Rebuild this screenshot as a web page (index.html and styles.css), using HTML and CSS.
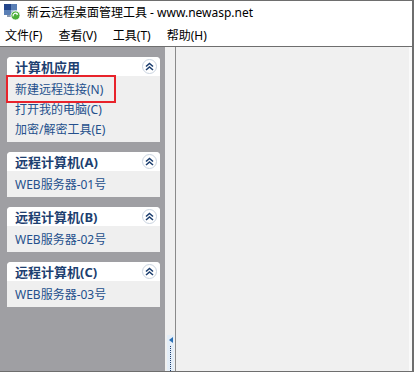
FILE: index.html
```html
<!DOCTYPE html>
<html lang="zh-CN">

<head>
    <meta charset="UTF-8">
    <meta name="viewport" content="width=device-width, initial-scale=1.0">
    <title>新云远程桌面管理工具</title>
    <link rel="stylesheet" href="styles.css">
</head>

<body>
    <div class="window">
        <div class="titlebar">
            <svg class="app-icon" width="18" height="18" viewBox="0 0 18 18">
                <rect x="1" y="1" width="13" height="11" fill="#5a7fb5" />
                <rect x="1" y="1" width="7" height="6" fill="#23458a" />
                <rect x="8" y="7" width="6" height="5" fill="#a9bfdc" />
                <rect x="4" y="12" width="7" height="2" fill="#8a9ab0" />
                <circle cx="12.5" cy="12.5" r="4.5" fill="#4caf3a" stroke="#fff" stroke-width="0.8" />
                <path d="M10.2 13.4 A2.4 2.4 0 0 1 14.4 11.2" fill="none" stroke="#fff" stroke-width="1.2" />
                <path d="M13.4 10 L15.2 11.3 L13.6 12.6 Z" fill="#fff" />
            </svg>
            <span class="title-text">新云远程桌面管理工具 - www.newasp.net</span>
        </div>

        <div class="menubar">
            <span class="menu-item">文件(F)</span>
            <span class="menu-item">查看(V)</span>
            <span class="menu-item">工具(T)</span>
            <span class="menu-item">帮助(H)</span>
        </div>

        <div class="main">
            <div class="sidebar">
                <div class="card">
                    <div class="card-head">
                        <span>计算机应用</span>
                        <span class="collapse">
                            <svg width="9" height="9" viewBox="0 0 9 9">
                                <path d="M1 4.5 L4.5 1.5 L8 4.5 M1 8 L4.5 5 L8 8" fill="none" stroke="#1d3f70" stroke-width="1.6" />
                            </svg>
                        </span>
                    </div>
                    <div class="card-body">
                        <div class="item highlight">新建远程连接(N)</div>
                        <div class="item">打开我的电脑(C)</div>
                        <div class="item">加密/解密工具(E)</div>
                    </div>
                </div>

                <div class="card">
                    <div class="card-head">
                        <span>远程计算机(A)</span>
                        <span class="collapse">
                            <svg width="9" height="9" viewBox="0 0 9 9">
                                <path d="M1 4.5 L4.5 1.5 L8 4.5 M1 8 L4.5 5 L8 8" fill="none" stroke="#1d3f70" stroke-width="1.6" />
                            </svg>
                        </span>
                    </div>
                    <div class="card-body">
                        <div class="item">WEB服务器-01号</div>
                    </div>
                </div>

                <div class="card">
                    <div class="card-head">
                        <span>远程计算机(B)</span>
                        <span class="collapse">
                            <svg width="9" height="9" viewBox="0 0 9 9">
                                <path d="M1 4.5 L4.5 1.5 L8 4.5 M1 8 L4.5 5 L8 8" fill="none" stroke="#1d3f70" stroke-width="1.6" />
                            </svg>
                        </span>
                    </div>
                    <div class="card-body">
                        <div class="item">WEB服务器-02号</div>
                    </div>
                </div>

                <div class="card">
                    <div class="card-head">
                        <span>远程计算机(C)</span>
                        <span class="collapse">
                            <svg width="9" height="9" viewBox="0 0 9 9">
                                <path d="M1 4.5 L4.5 1.5 L8 4.5 M1 8 L4.5 5 L8 8" fill="none" stroke="#1d3f70" stroke-width="1.6" />
                            </svg>
                        </span>
                    </div>
                    <div class="card-body">
                        <div class="item">WEB服务器-03号</div>
                    </div>
                </div>
            </div>

            <div class="splitter">
                <div class="grip">
                    <span class="grip-arrow"></span>
                    <span class="grip-dots"></span>
                </div>
            </div>

            <div class="content"></div>
        </div>
    </div>
</body>

</html>
```

FILE: styles.css
```css
body {
    margin: 0;
    font-family: "Noto Sans", "Noto Sans CJK SC", sans-serif;
    font-size: 12px;
    color: #000;
    background: #fff;
}

.window {
    width: 414px;
    height: 372px;
    box-sizing: border-box;
    border-top: 1px solid #6e6e6e;
    border-right: 2px solid #6e6e6e;
    border-bottom: 1px solid #6e6e6e;
    display: flex;
    flex-direction: column;
    background: #fff;
}

.titlebar {
    height: 22px;
    display: flex;
    align-items: center;
    padding-left: 3px;
}

.app-icon {
    margin-right: 6px;
}

.title-text {
    font-size: 12px;
}

.menubar {
    height: 23px;
    display: flex;
    align-items: center;
    padding-left: 5px;
}

.menu-item {
    margin-right: 16px;
}

.main {
    flex: 1;
    display: flex;
    border-top: 1px solid #6e6e6e;
    min-height: 0;
}

.sidebar {
    width: 153px;
    background: #9f9fa3;
    padding: 10px 5px 0 7px;
    display: flex;
    flex-direction: column;
    gap: 10px;
}

.card {
    background: #efefef;
    border-radius: 4px 4px 0 0;
    padding-bottom: 2px;
}

.card-head {
    height: 19px;
    background: #fff;
    border-radius: 4px 4px 0 0;
    display: flex;
    align-items: center;
    justify-content: space-between;
    padding: 0 3px 0 8px;
    font-weight: bold;
    font-size: 13px;
    color: #1d3f70;
}

.collapse {
    width: 13px;
    height: 13px;
    border: 1px solid #c9d3df;
    border-radius: 50%;
    background: #fff;
    display: flex;
    align-items: center;
    justify-content: center;
}

.card-body {
    padding-top: 4px;
}

.item {
    height: 20px;
    line-height: 20px;
    padding-left: 8px;
    color: #24508c;
}

.highlight {
    position: relative;
}

.highlight::after {
    content: "";
    position: absolute;
    left: -1px;
    top: -5px;
    width: 106px;
    height: 24px;
    border: 2px solid #e8232b;
}

.splitter {
    width: 10px;
    background: #f0f0f0;
    border-right: 1px solid #8a8a8a;
    display: flex;
    flex-direction: column;
    justify-content: flex-end;
}

.grip {
    height: 34px;
    margin-left: 2px;
    width: 7px;
    background: #e4eef8;
    display: flex;
    flex-direction: column;
    align-items: center;
    padding-top: 2px;
}

.grip-arrow {
    width: 0;
    height: 0;
    border-top: 3px solid transparent;
    border-bottom: 3px solid transparent;
    border-right: 4px solid #2a6fb4;
}

.grip-dots {
    flex: 1;
    margin-top: 3px;
    border-left: 1px dotted #1d3f70;
}

.content {
    flex: 1;
    background: #f0f0f0;
    border-right: 3px solid #fafafa;
}
```
